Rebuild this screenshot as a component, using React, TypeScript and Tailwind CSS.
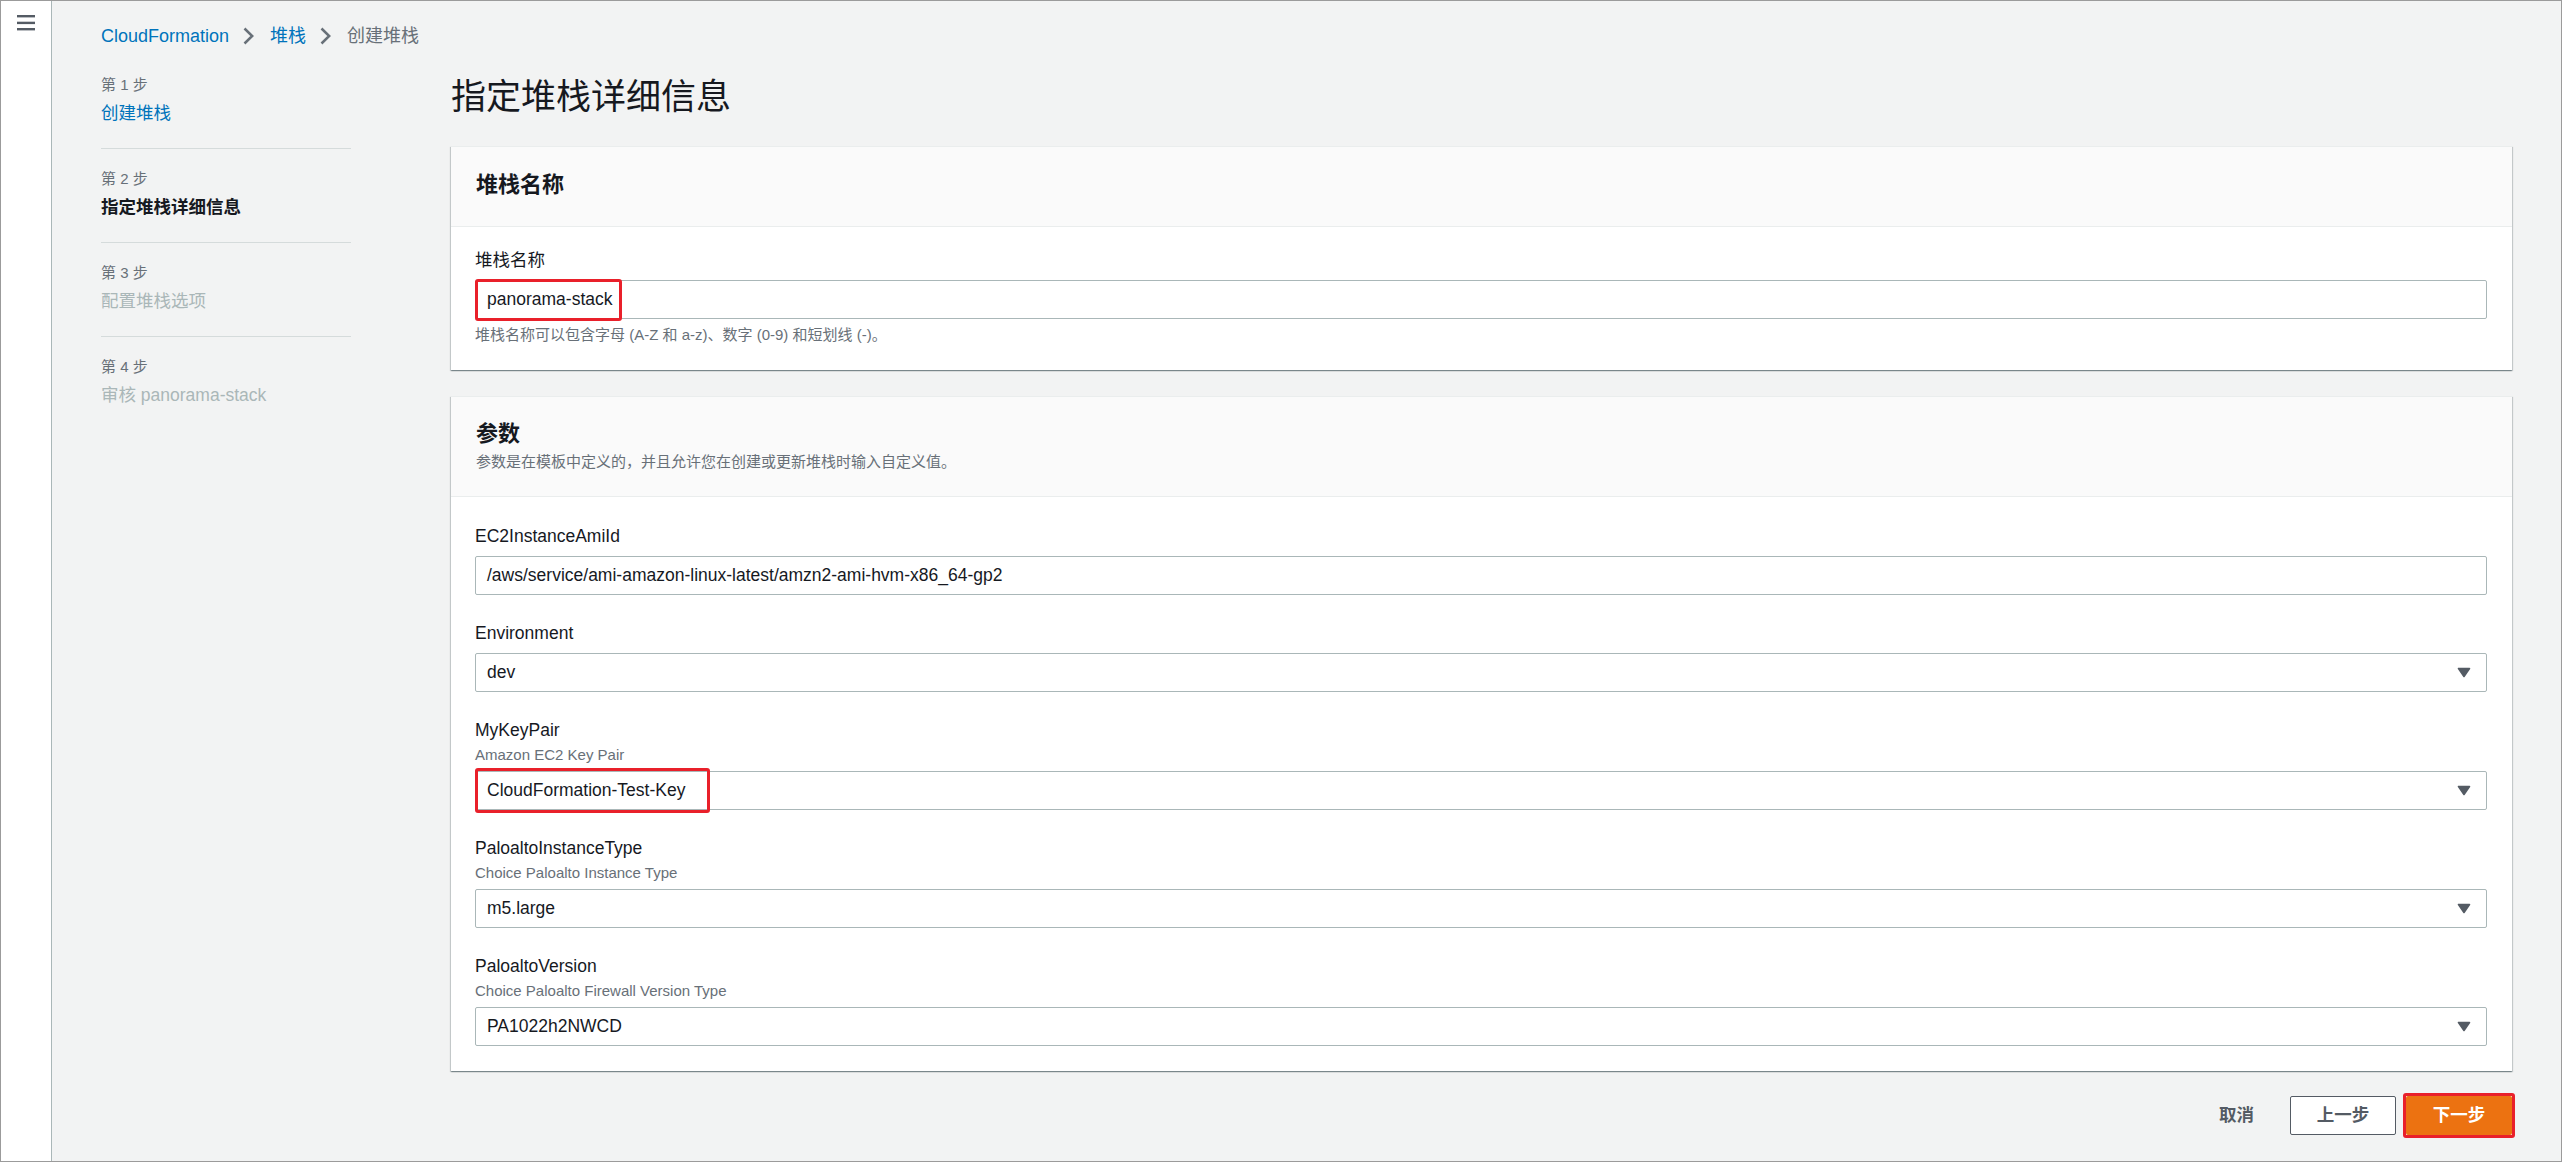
import React from 'react';

const Chevron = () => (
  <svg width="11" height="18" viewBox="0 0 11 18" className="shrink-0">
    <polyline points="1.5,1.5 9.2,9 1.5,16.5" fill="none" stroke="#687078" strokeWidth="2.5" />
  </svg>
);

const Caret = () => (
  <svg width="14" height="11" viewBox="0 0 14 11" className="shrink-0">
    <path d="M1.5 1.5h11L7 9.5z" fill="#545b64" stroke="#545b64" strokeWidth="1.6" strokeLinejoin="round" />
  </svg>
);

type FieldProps = {
  label: string;
  desc?: string;
  value: string;
  select?: boolean;
  highlight?: boolean;
};

const Field = ({ label, desc, value, select, highlight }: FieldProps) => (
  <div>
    <div className="text-[17.5px] leading-[22px] text-[#16191f]">{label}</div>
    {desc && <div className="mt-[5px] text-[15px] leading-[18px] text-[#687078]">{desc}</div>}
    <div
      className={`relative flex h-[39px] items-center justify-between rounded-[2px] border border-[#aab7b8] bg-white pl-[11px] pr-[15px] text-[17.5px] text-[#16191f] ${
        desc ? 'mt-[7px]' : 'mt-[9px]'
      }`}
    >
      <span>{value}</span>
      {select && <Caret />}
      {highlight && (
        <span className="absolute -left-[1px] -top-[4px] h-[45px] w-[235px] rounded-[3px] border-[3px] border-[#e9202a]" />
      )}
    </div>
  </div>
);

const steps = [
  { no: '第 1 步', title: '创建堆栈', kind: 'link' },
  { no: '第 2 步', title: '指定堆栈详细信息', kind: 'current' },
  { no: '第 3 步', title: '配置堆栈选项', kind: 'off' },
  { no: '第 4 步', title: '审核 panorama-stack', kind: 'off' },
];

export default function App() {
  return (
    <div className="flex h-[1162px] w-full overflow-hidden border border-[#9b9b9b] bg-[#f2f3f3] font-['Liberation_Sans','Noto_Sans_CJK_SC',sans-serif] text-[#16191f]">
      {/* side bar */}
      <aside className="w-[51px] shrink-0 border-r border-[#aab7b8] bg-white pl-[16px] pt-[14px]">
        <svg width="18" height="16" viewBox="0 0 18 16">
          <rect x="0" y="0" width="18" height="2.4" fill="#545b64" />
          <rect x="0" y="6.7" width="18" height="2.4" fill="#545b64" />
          <rect x="0" y="13" width="18" height="2.4" fill="#545b64" />
        </svg>
      </aside>

      <div className="flex-1 pl-[49px] pr-[49px] pt-[23px]">
        {/* breadcrumb */}
        <div className="flex h-[24px] items-center text-[18px]">
          <span className="text-[#0073bb]">CloudFormation</span>
          <span className="ml-[14px] mr-[16px]"><Chevron /></span>
          <span className="text-[#0073bb]">堆栈</span>
          <span className="ml-[14px] mr-[16px]"><Chevron /></span>
          <span className="text-[#687078]">创建堆栈</span>
        </div>

        <div className="mt-[27px] flex gap-[100px]">
          {/* wizard steps */}
          <ul className="w-[250px] shrink-0">
            {steps.map((s, i) => (
              <li
                key={s.no}
                className={`${i === 0 ? '' : 'pt-[20px]'} ${i === steps.length - 1 ? '' : 'border-b border-[#d5dbdb] pb-[23px]'}`}
              >
                <div className="text-[15px] leading-[20px] text-[#687078]">{s.no}</div>
                <div
                  className={`mt-[6px] text-[17.5px] leading-[24px] ${
                    s.kind === 'link'
                      ? 'text-[#0073bb]'
                      : s.kind === 'current'
                      ? 'font-bold text-[#16191f]'
                      : 'text-[#aab7b8]'
                  }`}
                >
                  {s.title}
                </div>
              </li>
            ))}
          </ul>

          {/* main form */}
          <div className="min-w-0 flex-1">
            <h1 className="text-[35px] font-normal leading-[44px] text-[#16191f]">指定堆栈详细信息</h1>

            {/* stack name */}
            <div className="mt-[27px] border-t border-[#eaeded] bg-white shadow-[0_1px_1px_0_rgba(0,28,36,0.3),1px_1px_1px_0_rgba(0,28,36,0.15),-1px_1px_1px_0_rgba(0,28,36,0.15)]">
              <div className="border-b border-[#eaeded] bg-[#fafafa] pb-[26px] pl-[25px] pt-[23px]">
                <h2 className="text-[22px] font-bold leading-[30px]">堆栈名称</h2>
              </div>
              <div className="pb-[26px] pl-[24px] pr-[25px] pt-[22px]">
                <div className="text-[17.5px] leading-[22px]">堆栈名称</div>
                <div className="relative mt-[9px] flex h-[39px] items-center rounded-[2px] border border-[#aab7b8] bg-white pl-[11px] text-[17.5px]">
                  panorama-stack
                  <span className="absolute -left-[1px] -top-[2px] h-[42px] w-[147px] rounded-[3px] border-[3px] border-[#e9202a]" />
                </div>
                <div className="mt-[7px] text-[15px] leading-[18px] text-[#687078]">
                  堆栈名称可以包含字母 (A-Z 和 a-z)、数字 (0-9) 和短划线 (-)。
                </div>
              </div>
            </div>

            {/* parameters */}
            <div className="mt-[26px] border-t border-[#eaeded] bg-white shadow-[0_1px_1px_0_rgba(0,28,36,0.3),1px_1px_1px_0_rgba(0,28,36,0.15),-1px_1px_1px_0_rgba(0,28,36,0.15)]">
              <div className="border-b border-[#eaeded] bg-[#fafafa] pb-[25px] pl-[25px] pt-[22px]">
                <h2 className="text-[22px] font-bold leading-[30px]">参数</h2>
                <p className="mt-[4px] text-[15px] leading-[18px] text-[#687078]">
                  参数是在模板中定义的，并且允许您在创建或更新堆栈时输入自定义值。
                </p>
              </div>
              <div className="flex flex-col gap-[27px] pb-[25px] pl-[24px] pr-[25px] pt-[28px]">
                <Field label="EC2InstanceAmiId" value="/aws/service/ami-amazon-linux-latest/amzn2-ami-hvm-x86_64-gp2" />
                <Field label="Environment" value="dev" select />
                <Field label="MyKeyPair" desc="Amazon EC2 Key Pair" value="CloudFormation-Test-Key" select highlight />
                <Field label="PaloaltoInstanceType" desc="Choice Paloalto Instance Type" value="m5.large" select />
                <Field label="PaloaltoVersion" desc="Choice Paloalto Firewall Version Type" value="PA1022h2NWCD" select />
              </div>
            </div>

            {/* actions */}
            <div className="mt-[25px] flex justify-end gap-[10px] text-[17.5px] font-bold">
              <button className="h-[39px] px-[26px] text-[#545b64]">取消</button>
              <button className="h-[39px] w-[106px] rounded-[2px] border border-[#545b64] bg-white text-[#545b64]">上一步</button>
              <button className="relative h-[39px] w-[106px] rounded-[2px] bg-[#ec7211] text-white">
                下一步
                <span className="absolute -inset-[3px] rounded-[3px] border-[3px] border-[#e9202a]" />
              </button>
            </div>
          </div>
        </div>
      </div>
    </div>
  );
}
